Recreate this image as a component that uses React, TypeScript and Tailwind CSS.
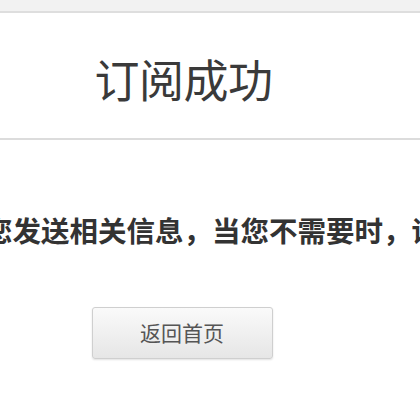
export default function App() {
  return (
    <div className="w-[420px] h-[420px] overflow-hidden bg-white font-['Noto_Sans_CJK_SC','Noto_Sans',sans-serif]">
      <div className="h-[13px] bg-[#f2f2f2] border-b-2 border-[#dedede]" />
      <div className="h-[127px] border-b-2 border-[#dcdcdc]">
        <div className="w-[367px] flex justify-center pt-[43px]">
          <h1 className="text-[45px] leading-[45px] font-normal text-[#3a3a3a] tracking-[-0.5px]">订阅成功</h1>
        </div>
      </div>
      <div className="w-[367px] flex flex-col items-center">
        <p className="mt-[76px] whitespace-nowrap text-[28.5px] leading-[28px] font-bold text-[#333]">
          我们将向您发送相关信息，当您不需要时，请退订
        </p>
        <button className="mt-[63px] mr-[3px] w-[181px] h-[52px] rounded-[3px] border border-[#cfcfcf] bg-gradient-to-b from-[#fafafa] to-[#e6e6e6] shadow-[0_1px_2px_rgba(0,0,0,0.12)] text-[21px] text-[#555]">
          返回首页
        </button>
      </div>
    </div>
  );
}
